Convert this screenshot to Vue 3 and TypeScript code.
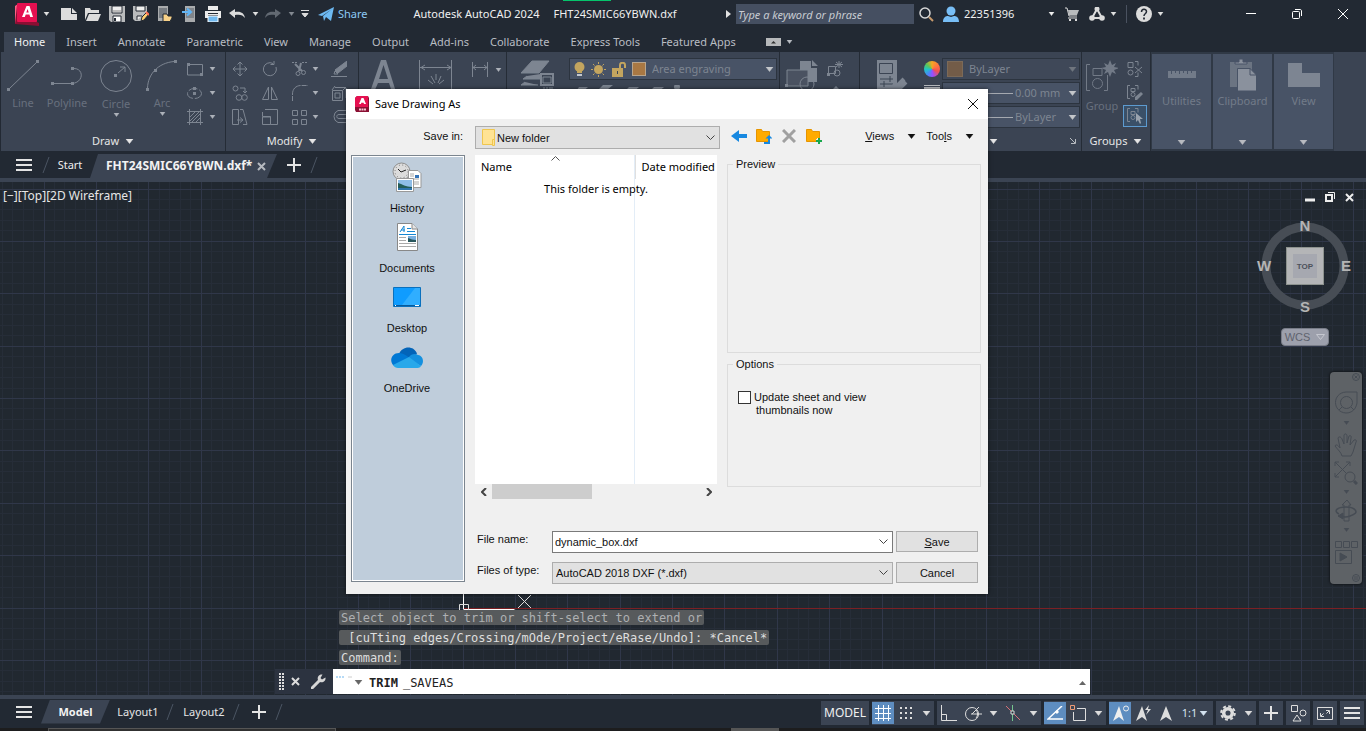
<script setup lang="ts">
import { h, ref } from 'vue'

type Glyph = [number, number, string]

const sq = (x: number, y: number) => `<rect x="${x}" y="${y}" width="3" height="3" fill="currentColor" stroke="none"/>`

const glyphs: Record<string, Glyph> = {
  logo: [24, 23, '<path d="M0 3 3 1v19l-3 1z" fill="#ff5f86" stroke="none"/><path d="M2 2 22 0v19l2 1v3L0 21z" fill="#8a0f33" stroke="none"/><rect x="2" width="20" height="19" rx="1" fill="#e51050" stroke="none"/><path d="M7 14 11.500 3h3L18 14h-2.800l-.8-2.500h-3.700L9.800 14zM11.300 9.500h2.400L12.600 6z" fill="#fff" stroke="none" fill-rule="evenodd"/>'],
  logoSmall: [14, 16, '<path d="M0 2 2 0h11l1 2v14H1l-1-2z" fill="#8a0f33" stroke="none"/><path d="M0 2 2 0h11v11H0z" fill="#e51050" stroke="none"/><path d="M4 8 6.500 2h2L11 8H9l-.4-1.200H6.300L6 8z" fill="#fff" stroke="none"/><path d="M4 13.500h7" stroke="#f3c5d2" stroke-width="2" stroke-dasharray="2 .5"/>'],
  caret: [7, 4, '<path d="M1 0h5L3.500 3.500z" fill="currentColor" stroke="currentColor" stroke-width=".5"/>'],
  caretBig: [9, 5, '<path d="M1 0h7L4.500 4.500z" fill="currentColor" stroke="currentColor" stroke-width=".5"/>'],
  caretUp: [7, 4, '<path d="M0 4h7L3.500 0z" fill="currentColor" stroke="none"/>'],
  play: [5, 8, '<path d="M0 0l5 4-5 4z" fill="currentColor" stroke="none"/>'],
  newFile: [16, 12, '<path d="M0 0h10v6h6v6H0zM11 0l5 5h-5z" fill="#dcdcdc" stroke="none"/>'],
  open: [16, 13, '<path d="M0 12V0h5l1 2h8v3H3z" fill="#dcdcdc" stroke="none"/><path d="M4 6h12l-3 7H1z" fill="#dcdcdc" stroke="none"/>'],
  save: [16, 16, '<path d="M0 0h16v16H2l-2-2z" fill="#b9bbbd" stroke="none"/><path d="M3 0h10v7H3z" fill="#eee" stroke="#222933"/><path d="M4 5h8" stroke="#888"/><path d="M4 16v-6h8v6z" fill="#fff" stroke="#222933"/><path d="M5 12h2v3H5z" fill="#222933" stroke="none"/>'],
  saveAs: [16, 16, '<path d="M0 0h14v8l-6 7H2l-2-2z" fill="#b9bbbd" stroke="none"/><path d="M3 0h9v5H3zM4 14v-4h5" fill="#eee" stroke="#222933"/><path d="M8 15l1-4 5-5 2 2-5 6z" fill="#ffcf70" stroke="#222933"/><path d="M13 6l3 3" stroke="#ff7055" stroke-width="2"/>'],
  fromWeb: [16, 16, '<rect x="1" width="10" height="15" fill="#a9abad" stroke="none"/><rect x="2" y="2" width="8" height="10" fill="#777c82" stroke="none"/><path d="M6 15.500V8h4l1 2h4v2l-2 3.500z" fill="#f9d288" stroke="#222933"/>'],
  toWeb: [14, 16, '<path d="M3 0h10v16H3z" fill="#a9abad" stroke="none"/><path d="M4 2h8v10H4z" fill="#80858b" stroke="none"/><path d="M0 6h8M5 2.500l4 3.500-4 3.500" stroke="#62b5f5" stroke-width="2"/>'],
  print: [16, 16, '<path d="M3 0h10v4H3zM0 5h16v7h-3V9H3v3H0z" fill="#ececec" stroke="none"/><path d="M3 10h10v6H3z" fill="#71b9ef" stroke="#fff"/><path d="M3 7.500h10" stroke="#222933"/>'],
  undo: [16, 10, '<path d="M0 4l6-4v3c6-1 9 1 10 6-2-3-5-4-10-3v3z" fill="#dcdcdc" stroke="none"/>'],
  redo: [16, 10, '<path d="M16 4l-6-4v3C4 2 1 4 0 9c2-3 5-4 10-3v3z" fill="#626972" stroke="none"/>'],
  more: [8, 8, '<path d="M0 .5h8M1 3.500h6L4 7z" fill="#dcdcdc" stroke="#dcdcdc"/>'],
  plane: [16, 14, '<path d="M0 8 16 0l-3 14-5-4-2 4-1-5 9-7L4 9z" fill="#6db9f2" stroke="none"/>'],
  search: [15, 15, '<circle cx="6" cy="6" r="5" stroke="#d8d8d8" stroke-width="1.500"/><path d="M10 10l4 4" stroke="#c79a6c" stroke-width="2"/>'],
  user: [16, 16, '<circle cx="8" cy="5" r="4.500" fill="#78bef6" stroke="none"/><path d="M0 16c0-5 3-6 5-6l3 1 3-1c3 0 5 2 5 6z" fill="#78bef6" stroke="none"/>'],
  cart: [14, 14, '<path d="M0 1h2l2 8h8" stroke="#dcdcdc"/><path d="M3 3h11l-2 5H4z" fill="#b9bbbd" stroke="none"/><path d="M3 11h9" stroke="#dcdcdc"/><rect x="4" y="12" width="2" height="2" fill="#dcdcdc" stroke="none"/><rect x="10" y="12" width="2" height="2" fill="#dcdcdc" stroke="none"/>'],
  adsk: [16, 14, '<path d="M8 2 3 11h10z" stroke="#dcdcdc" stroke-width="2"/><circle cx="8" cy="2" r="2.500" fill="#dcdcdc" stroke="none"/><circle cx="3" cy="11" r="2.800" fill="#dcdcdc" stroke="none"/><circle cx="13" cy="11" r="2.800" fill="#dcdcdc" stroke="none"/>'],
  help: [16, 16, '<circle cx="8" cy="8" r="8" fill="#dcdcdc" stroke="none"/><path d="M5.500 6c0-3.500 5-3.500 5-.5C10.500 8 8 7.500 8 10" stroke="#222933" stroke-width="1.500"/><path d="M8 11.500v2" stroke="#222933" stroke-width="1.800"/>'],
  minimize: [10, 10, '<path d="M0 4.500h10" stroke="#fff"/>'],
  restore: [10, 10, '<rect x=".5" y="2.500" width="7" height="7" rx="1" stroke="#fff"/><path d="M3 .5h5c1 0 1.500.5 1.500 1.500v5" stroke="#fff"/>'],
  close: [10, 10, '<path d="M0 0l10 10M10 0L0 10" stroke="currentColor"/>'],
  closeBold: [9, 9, '<path d="M1 1l7 7M8 1L1 8" stroke="currentColor" stroke-width="2"/>'],
  ribbonToggle: [15, 8, '<path d="M0 0h15v8H0z" fill="#b7b9bb" stroke="none"/><path d="M5 5.500h5L7.500 3z" fill="#333" stroke="none"/>'],
  line: [32, 31, sq(0, 28) + sq(29, 0) + '<path d="M3 28 29 3"/>'],
  poly: [32, 31, sq(0, 22) + sq(20, 22) + sq(20, 7) + '<path d="M3 23.500h18c12-1 12-15 2-15"/>'],
  circle: [32, 32, '<circle cx="16" cy="16" r="15.500"/>' + sq(14, 14) + '<path d="M18 13l7-6M20 7h5v5"/>'],
  arc: [32, 31, sq(0, 28) + sq(8, 9) + sq(28, 0) + '<path d="M1.500 28C2 14 12 3 28 1.500"/>'],
  rect: [16, 13, '<path d="M3 1.500h12.500v9M13 12H.5V3"/>' + sq(0, 0) + sq(13, 10)],
  ellipse: [15, 12, '<ellipse cx="7.500" cy="6.500" rx="7" ry="5" stroke-dasharray="9 2"/>' + sq(6, 5) + sq(6, 0)],
  hatch: [16, 16, '<path d="M2.500 0v16M13.500 0v16M0 2.500h16M0 13.500h16M3 8l5-5M3 12l9-9M5 13l8-8M9 13l4-4"/>'],
  move: [16, 16, '<path d="M8 1v14M1 8h14M5.500 3.500 8 1l2.500 2.500M5.500 12.500 8 15l2.500-2.500M3.500 5.500 1 8l2.500 2.500M12.500 5.500 15 8l-2.500 2.500"/>'],
  rotate: [16, 16, '<path d="M11 2.500A6.500 6.500 0 1 0 14 6M12 0v3.500H8.500"/>'],
  trim: [16, 16, '<path d="M0 1.500h6M10 1.500h6" stroke-dasharray="2 1"/><path d="M3 3l7 7M9 2 7 10" stroke-width="2"/><circle cx="6" cy="12.500" r="2"/><circle cx="11.500" cy="11.500" r="2"/>'],
  erase: [16, 16, '<path d="M16 0v5l-9 7-3-3z" fill="currentColor"/><path d="M4 10l3 3H3zM0 15.500h16"/>'],
  copy: [16, 16, '<circle cx="3.500" cy="3.500" r="2.500"/><circle cx="7" cy="12.500" r="2.800"/><circle cx="12.500" cy="12.500" r="2.800"/><path d="M8 3h5v5M11 6l2 2 2-2"/>'],
  mirror: [16, 16, '<path d="M6.500 2v12.500H.5zM9.500 2v12.500h6z"/>'],
  fillet: [16, 16, '<path d="M.5 16V9C.5 4 4 .5 9 .5h7" stroke-dasharray="5 1 14 1"/>'],
  explode: [16, 16, '<path d="M1.500 5.500h10v10h-10zM4 2.500h10M15 3v10M4 8h5v5H4zM1 5l3-4M12 5l3-3"/>'],
  stretch: [16, 16, '<path d="M.5.500h6v15h-6zM8 .5h3l4 15h-4M5 11h5M8 8.500l3 2.500-3 2.500"/>'],
  scale: [16, 16, '<path d="M3 .5h12.500v15H8.500V7.500H.5V3M.5 8h8v7.500h-8z"/>'],
  array: [15, 15, '<path d="M.5.500h5v5h-5zM9.500.500h5v5h-5zM.5 9.500h5v5h-5zM9.500 9.500h5v5h-5z"/>'],
  offset: [16, 14, '<path d="M16 .5H7a6.500 6.500 0 0 0 0 12h9M16 4.500H8c-3 0-3 4 0 4h8"/>'],
  bigA: [26, 32, '<path d="M0 32 11 0h5l10 32h-4l-3-9H8l-4 9zM9 19h9L13.500 5z" fill="currentColor" stroke="none"/>'],
  dimension: [34, 34, '<path d="M.5 0v34M32.500 0v34M1 7.500h32M6 5 2 7.500 6 10M28 5l4 2.500-4 2.500" /><path d="M9 20l5 4M25 20l-5 4M12 16l4 7M22 16l-3 7M17 14v6"/>'],
  linear: [17, 15, '<path d="M.5 0v15M15.500 0v15M1 5.500h14M4 3 1 5.500 4 8M12 3l3 2.500L12 8"/>'],
  layers: [34, 34, '<path d="M11 1h17L18 13H0zM6 16l-4 3h18l6-6M4 22l-4 3h17M4 29l-4 3h16" fill="currentColor"/><path d="M20 14h12v11H20z" fill="#3b4453" stroke="currentColor" stroke-width="2"/><path d="M22 17h8v6h-8zM22 28h2M26 27v6M28 28h4"/>'],
  bulb: [11, 15, '<circle cx="5.500" cy="5" r="5" fill="#c3a55f" stroke="none"/><path d="M3 9h5v2H3z" fill="#c3a55f" stroke="none"/><path d="M3 12h5v2H3z" fill="#c3c8cf" stroke="none"/>'],
  sun: [15, 15, '<circle cx="7.500" cy="7.500" r="4.500" fill="#c3a55f" stroke="none"/><path d="M7.500 0v2M7.500 13v2M0 7.500h2M13 7.500h2M2 2l1.500 1.500M11.500 11.500 13 13M2 13l1.500-1.500M11.500 3.500 13 2" stroke="#c3a55f"/>'],
  lock: [14, 15, '<path d="M0 6h11v9H0z" fill="#c3a55f" stroke="none"/><path d="M8 6V3c0-3 5-3 5 0v3" stroke="#c3a55f" stroke-width="2"/><path d="M5.500 9v3" stroke="#3b4453"/>'],
  layerRow: [130, 14, '<g fill="currentColor" stroke="none"><path d="M5 2h9L6 9H0zM29 0h10L28 9h-8zM55 2h10l-8 7h-9zM80 2h10l-8 7h-9z"/><circle cx="103" cy="2" r="3"/></g>'],
  block: [34, 34, '<path d="M15 1h11v7h6v14H15zM27 0l6 6h-6z" fill="currentColor" stroke="none"/><path d="M2 10h21v16H2z" fill="#4a5261"/><circle cx="22" cy="24" r="7"/>' + sq(0, 24)],
  blockEdit: [16, 16, '<path d="M1.500 5.500h7v7h-7z"/><circle cx="10" cy="12" r="3"/><path d="M12 0v7M9 1l6 5M15 1 9 6M8 3.500h8"/>' + sq(0, 12)],
  pencil: [14, 14, '<path d="M0 8 8 0l4 4-8 8H0z" fill="currentColor" stroke="none"/>'],
  props: [32, 34, '<path d="M1 0h20v34H1z" fill="currentColor" stroke="none"/><path d="M3.500 3.500h13v10h-13zM4 19h13M4 24h13M14 16v6M8 21v6" stroke="#3b4453"/><path d="M17 24l10 10M23 29l7-7M20 27l8-8" stroke-width="4"/>'],
  group: [32, 34, '<path d="M4 4.500H.5v26H4M18 30.500h3.500V15M7 8.500h9v7H7z"/><circle cx="11.500" cy="23.500" r="5"/><path d="M24 0l2 5 4-2-2 4 5 1-5 2 2 4-4-2-2 5-2-5-4 2 2-4-5-2 5-1-2-4 4 2z" fill="currentColor" stroke="none"/>'],
  ungroup: [16, 16, '<path d="M1 1.500h5v5H1zM8 .5h3v4M8 15.500h3v-4M8 6l7 6M15 6l-7 6"/><circle cx="3.500" cy="11.500" r="2.500"/>'],
  groupEdit: [16, 16, '<path d="M3 .5H.5v13H3M8 .5h3v4M4 3.500h4v3H4z"/><circle cx="6" cy="9.500" r="2"/><path d="M8 15v-3l6-5 2 2-6 6z" fill="currentColor" stroke="none"/>'],
  groupSel: [16, 16, '<path d="M3 .5H.5v13H3M8 .5h3v4M4 3.500h4v3H4z"/><circle cx="6" cy="9.500" r="2"/><path d="M9 5v9l2-2 2 4 1-1-1-4h3z" fill="#9aa3ae" stroke="none"/>'],
  launcher: [6, 6, '<path d="M0 0l5 5M5.500 1v4.500H1" stroke="#b7bbc0"/>'],
  ruler: [28, 7, '<path d="M0 0h28v7H0z" fill="currentColor" stroke="none"/><path d="M3.500 0v3M7.500 0v2M11.500 0v3M15.500 0v2M19.500 0v3M23.500 0v2" stroke="#485366"/>'],
  clipboard: [26, 32, '<path d="M0 3h22v25H0z" fill="#6b7482" stroke="none"/><path d="M5 5V3h4V0h4v3h4v2z" fill="#8a919d" stroke="#485366"/><path d="M7.500 9.500H20l6.500 6.500v16h-19z" fill="#8a919d" stroke="#485366"/><path d="M20 9v7h6" stroke="#485366"/>'],
  view: [32, 24, '<path d="M0 0h14v10h18v14H0z" fill="#7d8592" stroke="none"/>'],
  burger: [16, 12, '<path d="M0 1h16M0 6h16M0 11h16" stroke="#e4e4e4" stroke-width="2"/>'],
  plus: [14, 14, '<path d="M7 0v14M0 7h14" stroke="#e4e4e4" stroke-width="2"/>'],
  slash: [8, 16, '<path d="M1 16 7 0" stroke="#4b5563"/>'],
  folder: [13, 17, '<path d="M.5.500h12v15H.5z" fill="#ffe394" stroke="#efc64f"/><path d="M10.500 10.500h2v6h-2z" fill="#ffe394" stroke="#efc64f"/>'],
  chevron: [9, 6, '<path d="M.5.500l4 4 4-4" stroke="#444"/>'],
  chevronUp: [9, 5, '<path d="M.5 4.500l4-4 4 4" stroke="#555"/>'],
  chevronL: [6, 8, '<path d="M5 0 1 4l4 4" stroke="#444" stroke-width="2"/>'],
  chevronR: [6, 8, '<path d="M1 0l4 4-4 4" stroke="#444" stroke-width="2"/>'],
  back: [16, 12, '<path d="M0 6 8 0v4h8v4H8v4z" fill="#1788e0" stroke="none"/>'],
  upFolder: [16, 17, '<path d="M.5 1.500h5l1 2h7v10H.5z" fill="#ffab00" stroke="#e69500"/><path d="M8 15h5V9" stroke="#1788e0" stroke-width="2"/><path d="M9.500 10.500 13 7l3.500 3.500z" fill="#1788e0" stroke="none"/>'],
  del: [14, 14, '<path d="M1 1l12 12M13 1 1 13" stroke="#a0a0a0" stroke-width="3"/>'],
  addFolder: [16, 17, '<path d="M.5 1.500h5l1 2h7v10H.5z" fill="#ffab00" stroke="#e69500"/><path d="M13 10v6M10 13h6" stroke="#efefef" stroke-width="4"/><path d="M13 10v6M10 13h6" stroke="#19a84c" stroke-width="2"/>'],
  history: [30, 30, '<circle cx="9.500" cy="9.500" r="8.500" fill="#dcdcdc" stroke="#8d8d8d"/><circle cx="9.500" cy="9.500" r="6.500" stroke="#777" stroke-dasharray="1 2.400"/><path d="M6 7l3 3 5-2" stroke="#222"/><path d="M16.500 8.500H26l3 3v14H16.500z" fill="#fff" stroke="#999"/><path d="M18 12h4M18 14h4M18 17h9M18 20h9M18 22h9" stroke="#aaa"/><path d="M23 13h4v3h-4z" fill="#3674b7" stroke="none"/><path d="M4.500 16.500h17v13h-17z" fill="#fff" stroke="#999"/><path d="M6 18h14v10H6z" fill="#8ebde8" stroke="none"/><path d="M6 21c4 1 8 4 14 4v3H6z" fill="#235c58" stroke="none"/><path d="M6 26h14v2H6z" fill="#2e74ad" stroke="none"/>'],
  documents: [21, 28, '<path d="M.5.500H15l5.500 5.500v21.500H.5z" fill="#fff" stroke="#888"/><path d="M15 .5V6h5.500" fill="#e6e6e6" stroke="#888"/><path d="M3 9 7 3v6M4 7h4M10 5.500h4M10 8.500h8M2 11.500h17" stroke="#1688d4"/><path d="M2 14.500h7M2 17.500h7M2 20.500h17M2 23.500h17" stroke="#aaa"/><path d="M11 13h8v6h-8z" fill="#79afe0" stroke="none"/><path d="M11 15c3 1 5 2 8 2v2h-8z" fill="#28575d" stroke="none"/>'],
  desktop: [28, 20, '<path d="M.5.500h27v19H.5z" fill="#0f9cff" stroke="#0a70bd"/><path d="M27 1v17H9L22 1z" fill="#30aeff" stroke="none"/><path d="M1 18.500h26" stroke="#075a9c"/><path d="M2 18.500h1M22 18.500h4" stroke="#fff"/>'],
  onedrive: [32, 21, '<path d="M8 7c3-8 15-9 18 0L16 12z" fill="#0364b8" stroke="none"/><path d="M2 18c-4-5-1-12 6-12 4 0 8 3 11 5L4 19z" fill="#0078d4" stroke="none"/><path d="M18 10c2-3 6-4 9-2 6 1 6 8 3 11L17 12z" fill="#1490df" stroke="none"/><path d="M2 18l16-8 12 9c-1 2-3 2-5 2H7c-2 0-4-1-5-3z" fill="#28a8ea" stroke="none"/>'],
  vpMin: [10, 10, '<path d="M0 8h10" stroke="#eee" stroke-width="3"/>'],
  vpMax: [10, 10, '<path d="M1 3h6v6H1z" stroke="#eee" stroke-width="2"/><path d="M3 .5h6.500V7" stroke="#eee"/>'],
  grip: [5, 17, '<path d="M1 0v17M4 0v17" stroke="#ddd" stroke-width="2" stroke-dasharray="2 1"/>'],
  wrench: [15, 15, '<path d="M1 14 8 7" stroke="#d6d6d6" stroke-width="3" stroke-linecap="round"/><path d="M14.500 3.500 11 5.500 9.500 4l2-3.500C8 0 6 3 7 6l2 2c3 1 6-1 5.500-4.500z" fill="#d6d6d6" stroke="none"/>'],
  prompt: [16, 12, '<path d="M0 1h8" stroke="#6db5ed" stroke-dasharray="2 1"/><path d="M12 1h4" stroke="#ccc"/>'],
  wheel: [23, 23, '<path d="M11 1h11v11c-1 6-5 10-11 10C-3 21-3 2 11 1z"/><circle cx="11.500" cy="11.500" r="6"/><path d="M7 16l-3 3M16 16l3 3"/>'],
  hand: [24, 24, '<path d="M8 23C7 19 4 17 1 13c1-2 3-1 5 2L4 5c1-2 3-1 4 1l2 5V2c1-2 3-1 3 1v7l2-7c1-1 3 0 2 2l-1 7 4-5c2-1 3 1 2 2l-3 10-2 4z"/>'],
  zoomNav: [24, 24, '<path d="M1 1l14 14M1 16 16 1M1 5V1h4M12 1h4v4M1 12v4h4"/><circle cx="16" cy="16" r="5" fill="#5e6266"/><path d="M20 20l3 3" stroke-width="3"/>'],
  orbit: [23, 23, '<path d="M9 22V6H7l5-5 4 5h-2v16z"/><path d="M4 15c-6-3-2-7 7-7s15 6 4 9c-3 1-7 1-9 0" stroke-width="1.500"/><path d="M3 17l5-3v6z" fill="currentColor"/>'],
  motion: [23, 24, '<path d="M.5 1.500h6v6h-6zM8.500 1.500h6v6h-6zM16.500 1.500h6v6h-6zM.5 10.500h16v13H.5z"/><path d="M5 13l7 4-7 4z" fill="currentColor"/>'],
  tinyX: [8, 8, '<circle cx="4" cy="4" r="3.500"/><path d="M2.500 2.500l3 3M5.500 2.500l-3 3"/>'],
  tinyEq: [8, 8, '<circle cx="4" cy="4" r="3.500"/><path d="M2 3h4M2 5h4"/>'],
  sGrid: [16, 16, '<path d="M3.500 0v16M8.500 0v16M13.500 0v16M0 3.500h16M0 8.500h16M0 13.500h16" stroke="#fff"/>'],
  sSnap: [13, 13, '<path d="M0 1h13M0 6h13M0 11h13" stroke="#ddd" stroke-width="2" stroke-dasharray="2 3"/>'],
  sOrtho: [16, 16, '<path d="M.5 0v15.500H16M.5 9.500h5v6" stroke="#ddd"/>'],
  sPolar: [17, 15, '<circle cx="7" cy="8" r="6.500" stroke="#ddd"/><path d="M6 8h11M7 8l7-7M11 4c2 2 2 6 0 8" stroke="#ddd"/>'],
  sIso: [16, 16, '<path d="M1 1l14 14" stroke="#d77078"/><path d="M7.500 0v16" stroke="#75c58e"/><path d="M6 6h3v3H6z" fill="#222933" stroke="#ddd"/>'],
  sTrack: [16, 14, '<path d="M15 0 1 13h15" stroke="#fff" stroke-width="1.500"/><path d="M9 5l2 2" stroke="#fff" stroke-width="3"/>'],
  sSnap2: [16, 17, '<path d="M7 3.500h8.500v12h-12V7" stroke="#ddd"/><path d="M.5.500h4v4h-4z" stroke="#ef9b75"/>'],
  sAnno: [17, 17, '<path d="M7 1l5 15-5-4-6 4z" fill="#eee" stroke="none"/><circle cx="14" cy="3.500" r="2.500" stroke="#eee"/>'],
  sAnno2: [17, 17, '<path d="M7 1l5 15-5-4-6 4zM14 0l-4 5h3l-2 5 5-6h-3z" fill="#ddd" stroke="none"/>'],
  sAnno3: [14, 17, '<path d="M7 1l6 15-6-4-6 4z" fill="#ddd" stroke="none"/>'],
  gear: [16, 16, '<circle cx="8" cy="8" r="4.300" stroke="#ddd" stroke-width="3.500"/><circle cx="8" cy="8" r="6.800" stroke="#ddd" stroke-width="2" stroke-dasharray="3 2.340"/>'],
  sShapes: [17, 17, '<path d="M1.500.500h6v6h-6zM7 10l4 6H3z" stroke="#ddd"/><circle cx="13" cy="8" r="3" stroke="#ddd"/>'],
  sFull: [17, 13, '<path d="M.5.500h15v12H.5z" stroke="#ddd"/><path d="M9 3.500h3.500V7M12 4 9.500 6.500M3.500 6v3.500H7M4 9l2.500-2.500" stroke="#ddd"/>'],
}

const Ico = (p: { n: string }) => {
  const [w, hgt, body] = glyphs[p.n]
  return h('svg', {
    width: w, height: hgt, viewBox: `0 0 ${w} ${hgt}`,
    fill: 'none', stroke: 'currentColor', 'aria-hidden': 'true', innerHTML: body,
  })
}

const quick = [
  ['newFile', 'New'], ['open', 'Open'], ['save', 'Save'], ['saveAs', 'Save As'],
  ['fromWeb', 'Open from Web'], ['toWeb', 'Save to Web'], ['print', 'Plot'], ['undo', 'Undo'],
]
const ribbonTabs = ['Home', 'Insert', 'Annotate', 'Parametric', 'View', 'Manage', 'Output', 'Add-ins', 'Collaborate', 'Express Tools', 'Featured Apps']
const drawTools = [['line', 'Line'], ['poly', 'Polyline'], ['circle', 'Circle'], ['arc', 'Arc']]
const drawSmall = [['rect', 'Rectangle'], ['ellipse', 'Ellipse'], ['hatch', 'Hatch']]
const modifyTools = [
  ['move', ''], ['rotate', ''], ['trim', 'v'], ['erase', ''],
  ['copy', ''], ['mirror', ''], ['fillet', 'v'], ['explode', ''],
  ['stretch', ''], ['scale', ''], ['array', 'v'], ['offset', ''],
]
const collapsed = [['ruler', 'Utilities'], ['clipboard', 'Clipboard'], ['view', 'View']]
const places = [['history', 'History'], ['documents', 'Documents'], ['desktop', 'Desktop'], ['onedrive', 'OneDrive']]
const historyLines = [
  'Select object to trim or shift-select to extend or',
  ' [cuTting edges/Crossing/mOde/Project/eRase/Undo]: *Cancel*',
  'Command:',
]
const fileName = ref('dynamic_box.dxf')
const updateThumbs = ref(false)

// Grid of the drawing area: five minor cells to each major cell.
const majorStep = 52.38
function gridPath(kind: 'major' | 'minor') {
  let d = ''
  for (let k = -5; k < 360; k++) {
    if ((k % 5 === 0) !== (kind === 'major')) continue
    const x = Math.floor(44 + (k * majorStep) / 5) + 0.5
    const y = Math.floor(7 + (k * majorStep) / 5) + 0.5
    d += `M${x} 0V3000M0 ${y}H4000`
  }
  return d
}
const minorGrid = gridPath('minor')
const majorGrid = gridPath('major')
</script>

<template>
  <div class="app">
    <header class="titlebar">
      <button class="logo" aria-label="Application menu"><Ico n="logo" /><Ico n="caret" /></button>
      <button v-for="q in quick" :key="q[0]" class="tool" :aria-label="q[1]"><Ico :n="q[0]" /></button>
      <button class="thin" aria-label="Undo list"><Ico n="caret" /></button>
      <button class="tool" aria-label="Redo"><Ico n="redo" /></button>
      <button class="thin dim" aria-label="Redo list"><Ico n="caret" /></button>
      <button class="thin wide" aria-label="Customize toolbar"><Ico n="more" /></button>
      <button class="share"><Ico n="plane" />Share</button>
      <div class="app-title"><span>Autodesk AutoCAD 2024</span><span>FHT24SMIC66YBWN.dxf</span></div>
      <div class="title-right">
        <button class="thin" aria-label="Collapse search"><Ico n="play" /></button>
        <input class="keyword" type="text" placeholder="Type a keyword or phrase" aria-label="Search" />
        <button class="tool" aria-label="Search"><Ico n="search" /></button>
        <button class="account"><Ico n="user" />22351396<Ico n="caret" class="push" /></button>
        <button class="tool" aria-label="App store"><Ico n="cart" /></button>
        <button class="tool adsk" aria-label="Autodesk apps"><Ico n="adsk" /><Ico n="caret" /></button>
        <button class="tool help" aria-label="Help"><Ico n="help" /><Ico n="caret" /></button>
        <div class="win">
          <button aria-label="Minimize"><Ico n="minimize" /></button>
          <button aria-label="Restore"><Ico n="restore" /></button>
          <button aria-label="Close"><Ico n="close" /></button>
        </div>
      </div>
      <i class="progress"></i>
    </header>

    <nav class="tabs" aria-label="Ribbon tabs">
      <button v-for="(t, i) in ribbonTabs" :key="t" :class="{ on: i === 0 }">{{ t }}</button>
      <button class="toggle" aria-label="Minimize ribbon"><Ico n="ribbonToggle" /><Ico n="caret" /></button>
    </nav>

    <section class="ribbon">
      <div class="panel draw">
        <div class="row">
          <button v-for="(t, i) in drawTools" :key="t[0]" class="big" :class="t[0]"><Ico :n="t[0]" /><span>{{ t[1] }}</span><Ico v-if="i > 1" n="caret" class="arrow" /></button>
          <div class="smalls">
            <button v-for="t in drawSmall" :key="t[0]" :aria-label="t[1]"><span><Ico :n="t[0]" /></span><Ico n="caret" class="arrow" /></button>
          </div>
        </div>
        <button class="foot">Draw<Ico n="caretBig" /></button>
      </div>
      <div class="panel modify">
        <div class="matrix">
          <button v-for="t in modifyTools" :key="t[0]" :aria-label="t[0]"><span><Ico :n="t[0]" /></span><Ico v-if="t[1]" n="caret" class="arrow" /></button>
        </div>
        <button class="foot">Modify<Ico n="caretBig" /></button>
      </div>
      <div class="panel annotation">
        <div class="row icons">
          <button aria-label="Text"><Ico n="bigA" /></button>
          <button aria-label="Dimension"><Ico n="dimension" /></button>
          <button class="linear" aria-label="Linear"><Ico n="linear" /><Ico n="caret" class="arrow" /></button>
        </div>
      </div>
      <div class="panel layers">
        <button aria-label="Layer properties"><Ico n="layers" /></button>
        <div class="layer-col">
          <div class="combo lit">
            <Ico n="bulb" /><Ico n="sun" /><Ico n="lock" /><i class="swatch"></i>
            <select aria-label="Layer"><option>Area engraving</option></select>
            <Ico n="caretBig" class="end" />
          </div>
          <Ico n="layerRow" />
        </div>
      </div>
      <div class="panel block">
        <button aria-label="Insert block"><Ico n="block" /></button>
        <div class="stack"><button aria-label="Create block"><Ico n="blockEdit" /></button><button aria-label="Edit block"><Ico n="pencil" /></button></div>
      </div>
      <div class="panel properties">
        <div class="row">
          <button class="match" aria-label="Match properties"><Ico n="props" /></button>
          <div class="prop-icons"><i class="color-wheel"></i><i class="weight"></i></div>
          <div class="combos">
            <div class="combo off"><i class="swatch dull"></i><select aria-label="Object color"><option>ByLayer</option></select><Ico n="caretBig" class="end" /></div>
            <div class="combo"><i class="rule"></i><select aria-label="Lineweight"><option>0.00 mm</option></select><Ico n="caretBig" class="end" /></div>
            <div class="combo"><i class="rule"></i><select aria-label="Linetype"><option>ByLayer</option></select><Ico n="caretBig" class="end" /></div>
          </div>
        </div>
        <div class="foot"><Ico n="caretBig" /><button class="launch" aria-label="Properties palette"><Ico n="launcher" /></button></div>
      </div>
      <div class="panel groups">
        <div class="row">
          <button class="big"><Ico n="group" /><span>Group</span></button>
          <div class="stack">
            <button aria-label="Ungroup"><Ico n="ungroup" /></button>
            <button aria-label="Group edit"><Ico n="groupEdit" /></button>
            <button class="picked" aria-label="Group selection"><Ico n="groupSel" /></button>
          </div>
        </div>
        <button class="foot">Groups<Ico n="caretBig" /></button>
      </div>
      <button v-for="c in collapsed" :key="c[1]" class="panel closed"><span class="pic"><Ico :n="c[0]" /></span><span>{{ c[1] }}</span><Ico n="caretBig" class="drop" /></button>
    </section>

    <nav class="files" aria-label="Open drawings">
      <button class="menu" aria-label="Tab menu"><Ico n="burger" /></button>
      <Ico n="slash" />
      <button class="start">Start</button>
      <div class="file-on"><button>FHT24SMIC66YBWN.dxf*</button><button class="x" aria-label="Close drawing"><Ico n="closeBold" /></button></div>
      <button class="add" aria-label="New drawing"><Ico n="plus" /></button>
      <Ico n="slash" />
    </nav>

    <main class="canvas">
      <svg class="sheet" width="100%" height="100%" fill="none" aria-hidden="true">
        <path :d="minorGrid" stroke="#262d38" />
        <path :d="majorGrid" stroke="#303749" />
        <line x1="464" y1="426.5" x2="100%" y2="426.5" stroke="#7c2024" />
        <path d="M463.500 411v16M463.500 427.500h51" stroke="#fff" />
        <path d="M459.500 422.500h9v9h-9z" stroke="#ddd" />
        <path d="M518 413l13 13M531 413l-13 13" stroke="#ddd" />
      </svg>
      <div class="view-label">[−][Top][2D Wireframe]</div>
      <div class="vp-controls">
        <button aria-label="Minimize view"><Ico n="vpMin" /></button>
        <button aria-label="Maximize view"><Ico n="vpMax" /></button>
        <button aria-label="Close view"><Ico n="closeBold" /></button>
      </div>
      <svg class="cube" width="100" height="100" viewBox="0 0 100 100" role="img" aria-label="View cube">
        <circle cx="50" cy="50" r="39" fill="none" stroke="#474d55" stroke-width="9" />
        <rect x="31.500" y="31.500" width="37" height="37" fill="#b4b5b7" stroke="#8d928e" />
        <rect x="38" y="38" width="24" height="24" fill="#a6a8b0" />
        <g font-family="Liberation Sans, sans-serif" font-weight="bold" text-anchor="middle" fill="#b4b4b4" font-size="15">
          <text x="50" y="15">N</text><text x="50" y="96">S</text><text x="9" y="55">W</text><text x="91" y="55">E</text>
          <text x="50" y="53" font-size="8" fill="#4c515b">TOP</text>
        </g>
      </svg>
      <button class="wcs">WCS<svg width="9" height="6" viewBox="0 0 9 6" fill="none" stroke="#c5c7cf"><path d="M.5.500h8l-4 5z" /></svg></button>
      <aside class="navbar">
        <button class="corner" aria-label="Close navigation bar"><Ico n="tinyX" /></button>
        <button class="wheel" aria-label="Navigation wheel"><Ico n="wheel" /><Ico n="caret" /></button>
        <button class="pan" aria-label="Pan"><Ico n="hand" /></button>
        <button class="zm" aria-label="Zoom"><Ico n="zoomNav" /><Ico n="caret" /></button>
        <button class="orb" aria-label="Orbit"><Ico n="orbit" /><Ico n="caret" /></button>
        <button class="mot" aria-label="Show motion"><Ico n="motion" /></button>
        <button class="corner" aria-label="Navigation options"><Ico n="tinyEq" /></button>
      </aside>
      <div class="command">
        <div class="log"><p v-for="l in historyLines" :key="l">{{ l }}</p></div>
        <div class="cmd-row">
          <div class="cmd-tools"><Ico n="grip" /><button aria-label="Close command line"><Ico n="closeBold" /></button><button aria-label="Customize"><Ico n="wrench" /></button></div>
          <div class="cmd-line"><Ico n="prompt" /><button class="recent" aria-label="Recent commands"><Ico n="caretBig" /></button><b>TRIM</b><span>_SAVEAS</span><button class="up" aria-label="Expand history"><Ico n="caretUp" /></button></div>
        </div>
      </div>
    </main>

    <footer class="status">
      <nav class="layouts" aria-label="Layouts">
        <button class="menu" aria-label="Layout menu"><Ico n="burger" /></button>
        <button class="model">Model</button>
        <button class="lay">Layout1</button><Ico n="slash" />
        <button class="lay">Layout2</button><Ico n="slash" />
        <button class="add" aria-label="New layout"><Ico n="plus" /></button><Ico n="slash" />
      </nav>
      <div class="modes">
        <div class="set"><button class="word">MODEL</button></div>
        <div class="set"><button class="act" aria-label="Grid"><Ico n="sGrid" /></button><button class="w25" aria-label="Snap"><Ico n="sSnap" /></button><button class="dd" aria-label="Snap options"><Ico n="caretBig" /></button></div>
        <div class="set"><button class="w25" aria-label="Ortho"><Ico n="sOrtho" /></button><button class="w25" aria-label="Polar"><Ico n="sPolar" /></button><button class="dd" aria-label="Polar options"><Ico n="caretBig" /></button><button class="w25" aria-label="Isometric"><Ico n="sIso" /></button><button class="dd" aria-label="Isometric options"><Ico n="caretBig" /></button></div>
        <div class="set"><button class="act" aria-label="Object tracking"><Ico n="sTrack" /></button><button class="w25" aria-label="Object snap"><Ico n="sSnap2" /></button><button class="dd" aria-label="Object snap options"><Ico n="caretBig" /></button></div>
        <div class="set"><button class="act" aria-label="Annotation visibility"><Ico n="sAnno" /></button><button class="w25" aria-label="Auto scale"><Ico n="sAnno2" /></button><button class="w22" aria-label="Annotation scale"><Ico n="sAnno3" /></button><button class="ratio">1:1<Ico n="caretBig" /></button></div>
        <div class="set"><button class="w25" aria-label="Workspace"><Ico n="gear" /></button><button class="dd" aria-label="Workspace options"><Ico n="caretBig" /></button></div>
        <div class="set"><button class="w25" aria-label="Annotation monitor"><Ico n="plus" /></button></div>
        <div class="set"><button class="w25" aria-label="Isolate objects"><Ico n="sShapes" /></button></div>
        <div class="set"><button class="w25" aria-label="Clean screen"><Ico n="sFull" /></button></div>
        <div class="set"><button class="w25" aria-label="Customization"><Ico n="burger" /></button></div>
      </div>
    </footer>
    <div class="taskbar"><i></i><i></i></div>

    <div class="dialog" role="dialog" aria-label="Save Drawing As">
      <div class="dlg-title"><Ico n="logoSmall" /><h1>Save Drawing As</h1><button aria-label="Close dialog"><Ico n="close" /></button></div>
      <div class="dlg-top">
        <label for="savein">Save in:</label>
        <div class="pick"><Ico n="folder" /><select id="savein"><option>New folder</option></select><Ico n="chevron" /></div>
        <div class="dlg-tools">
          <button aria-label="Back"><Ico n="back" /></button>
          <button aria-label="Up one level"><Ico n="upFolder" /></button>
          <button aria-label="Delete"><Ico n="del" /></button>
          <button aria-label="New folder"><Ico n="addFolder" /></button>
        </div>
        <button class="txt"><span><u>V</u>iews</span><Ico n="caretBig" /></button>
        <button class="txt"><span>Too<u>l</u>s</span><Ico n="caretBig" /></button>
      </div>
      <div class="dlg-main">
        <div class="places">
          <button v-for="p in places" :key="p[0]"><span class="pic"><Ico :n="p[0]" /></span><span>{{ p[1] }}</span></button>
        </div>
        <div class="dlg-content">
          <div class="browse">
            <div class="listing">
              <div class="sheet-list">
                <table>
                  <thead><tr><th class="name">Name<Ico n="chevronUp" class="sort" /></th><th>Date modified</th></tr></thead>
                </table>
                <p>This folder is empty.</p>
              </div>
              <div class="hbar"><button aria-label="Scroll left"><Ico n="chevronL" /></button><i></i><button aria-label="Scroll right"><Ico n="chevronR" /></button></div>
            </div>
            <div class="side">
              <fieldset class="preview"><legend>Preview</legend></fieldset>
              <fieldset class="options"><legend>Options</legend>
                <input id="thumbs" v-model="updateThumbs" type="checkbox" />
                <label for="thumbs">Update sheet and view<br /><span>thumbnails now</span></label>
              </fieldset>
            </div>
          </div>
          <form class="entry" @submit.prevent>
            <label for="fname">File name:</label>
            <div class="pick white"><input id="fname" v-model="fileName" type="text" /><Ico n="chevron" /></div>
            <button><u>S</u>ave</button>
            <label for="ftype">Files of type:</label>
            <div class="pick"><select id="ftype"><option>AutoCAD 2018 DXF (*.dxf)</option></select><Ico n="chevron" /></div>
            <button>Cancel</button>
          </form>
        </div>
      </div>
    </div>
  </div>
</template>

<style>
body { margin: 0; background: #222933; }
</style>

<style scoped>
* { box-sizing: border-box; }
.app { position: relative; min-height: 100vh; display: flex; flex-direction: column; overflow: hidden; background: #222933; color: #e2e2e2; font: 11px/16px "Noto Sans", sans-serif; }
button, input, select { font: inherit; color: inherit; background: none; border: 0; padding: 0; margin: 0; appearance: none; border-radius: 0; white-space: nowrap; }
button { display: flex; align-items: center; justify-content: center; }
svg { display: block; flex: none; }
i { display: block; flex: none; }

.titlebar { position: relative; display: flex; align-items: center; height: 28px; padding-left: 15px; }
.logo { gap: 4px; width: 42px; justify-content: flex-start; }
.tool { width: 24px; height: 24px; }
.thin { width: 12px; height: 24px; }
.thin.wide { width: 16px; }
.dim { color: #858b93; }
.share { gap: 4px; margin-left: 5px; color: #8cc9f5; }
.app-title { flex: 1; display: flex; gap: 14px; padding-left: 46px; color: #f0f0f0; white-space: nowrap; }
.title-right { display: flex; align-items: center; width: 644px; }
.keyword { width: 178px; height: 20px; margin-left: 2px; padding: 0 2px; background: #454f61; font-style: italic; }
.keyword::placeholder { color: #c8ccd2; opacity: 1; }
.account { gap: 5px; width: 112px; margin-left: 5px; justify-content: flex-start; color: #f0f0f0; }
.push { margin-left: auto; }
.title-right .tool + .adsk { margin-left: 4px; }
.account + .tool { margin-left: 5px; }
.adsk { gap: 5px; width: 29px; }
.help { gap: 5px; width: 47px; margin-left: 9px; border-left: 1px solid #4a5260; height: 18px; }
.win { display: flex; margin-left: auto; }
.win button { width: 46px; height: 28px; color: #fff; }
.progress { position: absolute; top: 0; left: 563px; width: 48px; height: 1px; background: #05c46b; }

.tabs { display: flex; gap: 1px; height: 24px; padding: 4px 0 0 4px; }
.tabs button { padding: 0 10px; color: #b9bdc3; height: 20px; }
.tabs .on { min-width: 51px; background: #3b4453; color: #f2f2f2; }
.tabs .toggle { gap: 5px; margin-left: 9px; }

.ribbon { display: flex; height: 99px; background: #3b4453; margin-left: 1px; color: #7d8591; }
.panel { display: flex; flex-direction: column; border-right: 1px solid #252c36; padding-top: 8px; flex: none; }
.row { display: flex; }
.panel .foot { display: flex; align-items: center; justify-content: center; gap: 6px; margin-top: auto; height: 20px; color: #e6e6e6; }
.arrow { color: #aeb3ba; }
.draw { width: 225px; }
.modify { width: 133px; }
.annotation { width: 148px; }
.layers { width: 273px; flex-direction: row; gap: 14px; padding-left: 14px; align-items: flex-start; }
.block { width: 80px; flex-direction: row; gap: 4px; padding-left: 5px; align-items: flex-start; }
.properties { width: 222px; }
.groups { width: 69px; }
.big { flex-direction: column; justify-content: flex-start; width: 44px; color: #7d8591; }
.big.circle { width: 54px; }
.big.arc { width: 38px; }
.big span { margin-top: 3px; color: #68707e; line-height: 18px; }
.smalls { display: flex; flex-direction: column; margin-left: 6px; }
.smalls button { height: 24px; }
.smalls button span { display: flex; width: 18px; }
.smalls .arrow { margin-left: 4px; }
.smalls, .matrix, .stack { margin-top: -3px; }
.matrix { display: grid; grid-template-columns: 30px 30px 39px 30px; grid-auto-rows: 24px; padding-left: 6px; }
.matrix button { justify-content: flex-start; gap: 3px; }
.matrix button span { display: flex; width: 17px; }
.icons { gap: 23px; align-items: flex-start; padding-left: 11px; }
.icons .linear { gap: 6px; margin-left: -4px; padding-top: 2px; }
.layer-col { display: flex; flex-direction: column; gap: 5px; margin-top: -2px; }
.layer-col > svg { margin-left: 5px; }
.combo { display: flex; align-items: center; gap: 6px; width: 208px; height: 22px; padding: 0 2px 0 4px; background: #485366; border: 1px solid #2c343f; color: #7d8591; }
.combo select { flex: 1; min-width: 0; }
.combo .end { color: #c4c7cb; margin-left: auto; }
.swatch { width: 14px; height: 14px; background: #a97843; border: 1px solid #b9a58c; }
.swatch.dull { background: #735c48; border-color: #7c6a58; width: 16px; height: 16px; }
.stack { display: flex; flex-direction: column; }
.stack button { width: 24px; height: 24px; }
.match { align-self: flex-start; padding-left: 16px; }
.prop-icons { margin: 1px 0 0 16px; width: 18px; }
.color-wheel { width: 16px; height: 16px; border-radius: 50%; background: conic-gradient(#f5a623, #ff7043 18%, #ec4f55 32%, #9a4dff 48%, #4a86f7 60%, #20c6c6 74%, #5bc65a 86%, #f5a623); }
.weight { width: 16px; height: 4px; margin-top: 8px; border: solid #b9bcc0; border-width: 1px 0 2px; }
.combos { display: flex; flex-direction: column; gap: 2px; margin-top: -2px; }
.combos .combo { width: 138px; }
.combo.off { background: #3f4858; }
.combo.off .end { color: #70767f; }
.rule { width: 66px; height: 1px; background: #a5a9b0; margin-right: -4px; }
.properties .foot { justify-content: flex-start; padding-left: 129px; }
.launch { margin-left: auto; margin-right: 5px; }
.groups .big { width: 40px; color: #727a87; }
.groups .stack button { margin-left: 1px; }
.groups .stack .picked { border: 1px solid #5d9bd0; background: #3a5068; height: 22px; }
.closed { width: 61px; align-items: center; justify-content: flex-start; background: #485366; border: 1px solid #303946; border-width: 2px 1px; padding: 3px 0 0; color: #727b89; }
.closed .pic { display: flex; align-items: center; justify-content: center; height: 35px; }
.closed .pic + span { margin-top: 1px; }
.closed .drop { color: #b8bbc0; margin: auto 0 4px; }

.files { display: flex; align-items: center; height: 31px; border-bottom: 4px solid #3b4453; }
.menu { width: 48px; padding-left: 1px; height: 24px; }
.files .menu { width: 42px; padding-left: 6px; }
.start { width: 40px; color: #eee; }
.file-on { display: flex; align-items: center; align-self: flex-end; gap: 5px; width: 187px; height: 24px; padding-left: 16px; background: #3b4453; clip-path: polygon(8px 0, 100% 0, calc(100% - 10px) 100%, 0 100%); color: #f2f2f2; font-weight: bold; font-size: 12px; }
.x { color: #b6bac0; }
.files .add { width: 33px; }

.canvas { position: relative; flex: 1; background: #212830; }
.sheet { position: absolute; inset: 0; }
.view-label { position: absolute; left: 3px; top: 6px; color: #e6e6e6; font-size: 12px; }
.vp-controls { position: absolute; right: 12px; top: 10px; display: flex; gap: 10px; color: #eee; }
.cube { position: absolute; right: 11px; top: 34px; }
.wcs { position: absolute; right: 37px; top: 146px; width: 48px; height: 18px; gap: 6px; border-radius: 4px; background: #9da0ac; border: 1px solid #787c87; color: #5f636e; font-family: "Liberation Sans", sans-serif; }
.navbar { position: absolute; right: 4px; top: 190px; width: 32px; height: 212px; display: flex; flex-direction: column; align-items: center; background: #5e6266; border-radius: 4px; box-shadow: 0 0 2px 1px #15191e; color: #464c54; padding-top: 1px; }
.navbar button { flex-direction: column; gap: 7px; }
.navbar .corner { align-self: flex-end; margin-right: 2px; }
.navbar .wheel { margin-top: 10px; }
.navbar .pan { margin-top: 8px; }
.navbar .zm { margin-top: 4px; gap: 5px; }
.navbar .orb { margin-top: 5px; gap: 6px; }
.navbar .mot { margin-top: 8px; }
.navbar .corner:last-child { margin-top: auto; margin-bottom: 2px; }

.command { position: absolute; left: 275px; right: 276px; bottom: 1px; font: 12px/16px "DejaVu Sans Mono", monospace; }
.log { display: flex; flex-direction: column; align-items: flex-start; gap: 5px; padding-left: 64px; margin-bottom: 4px; }
.log p { margin: 0; height: 15px; padding: 0 2px; background: #575a5c; border-radius: 2px; white-space: pre; color: #dedede; }
.log p:first-child { color: #aeb0b2; }
.cmd-row { display: flex; height: 25px; }
.cmd-tools { display: flex; align-items: center; gap: 7px; width: 58px; padding-left: 4px; background: #2c3340; color: #ddd; }
.cmd-tools button:last-child { margin-left: 4px; }
.cmd-line { flex: 1; display: flex; align-items: center; background: #fff; color: #222; padding: 2px 4px 0 3px; }
.cmd-line > svg { align-self: flex-start; margin-top: 5px; }
.recent { margin: 0 6px 0 2px; color: #666; }
.cmd-line span { margin-left: 5px; }
.up { margin-left: auto; color: #666; }

.status { display: flex; justify-content: space-between; border-top: 4px solid #3b4453; height: 33px; }
.layouts { display: flex; align-items: center; height: 24px; padding-top: 1px; }
.status .menu { width: 41px; padding-left: 7px; }
.model { width: 69px; height: 24px; background: #3b4453; clip-path: polygon(9px 0, 100% 0, calc(100% - 10px) 100%, 0 100%); font-weight: bold; color: #f2f2f2; }
.lay { width: 56px; color: #e6e6e6; }
.layouts .lay + svg { margin-right: 2px; }
.layouts .add { width: 33px; }
.modes { display: flex; align-items: center; gap: 3px; padding: 2px 2px 0 0; height: 26px; }
.set { display: flex; align-items: center; height: 24px; background: #3b4453; }
.set button { height: 22px; color: #ddd; }
.set .word { width: 48px; font-size: 12px; color: #f0f0f0; }
.set .act { width: 22px; background: #5e8dc0; }
.w25 { width: 24px; }
.w22 { width: 22px; }
.dd { width: 16px; }
.ratio { width: 36px; gap: 2px; }
.set .ratio { color: #d5e3f0; }
.taskbar { display: flex; justify-content: space-between; height: 3px; background: #1d1d1e; padding: 0 587px 0 48px; }
.taskbar i { height: 3px; width: 48px; background: #555; }
.taskbar i:first-child { width: 288px; border: 1px solid #555; border-bottom: 0; background: #303030; }

.dialog { position: absolute; left: 346px; top: 89px; width: 642px; background: #f0f0f0; color: #111; box-shadow: 0 0 4px #0009; font: 11px/14px "Liberation Sans", sans-serif; }
.dlg-title { display: flex; align-items: center; gap: 6px; height: 30px; padding: 0 10px 0 9px; background: #fff; }
.dlg-title h1 { margin: 0; font: 11px/16px "Noto Sans", sans-serif; color: #000; flex: 1; }
.dlg-top { display: flex; align-items: center; height: 36px; padding: 0 14px 2px 0; color: #111; }
.dlg-top label { width: 117px; text-align: right; margin-right: 12px; }
.pick { display: flex; align-items: center; gap: 2px; height: 23px; padding: 0 4px; background: #e1e1e1; border: 1px solid #adadad; }
.pick select, .pick input { flex: 1; min-width: 0; }
.dlg-top .pick { width: 245px; padding-left: 6px; margin-top: 3px; }
.white { background: #fff; border-color: #7a7a7a; }
.dlg-tools { display: flex; gap: 9px; margin-left: 11px; }
.dlg-tools button { width: 16px; }
.dlg-top .dlg-tools { flex: 1; }
.txt { gap: 13px; margin-left: 10px; }
.dlg-main { display: grid; grid-template-columns: 114px 1fr; gap: 10px; padding: 0 7px 10px 5px; }
.places { margin-bottom: 2px; background: #bfcddb; border: 1px solid #7b858f; box-shadow: inset 0 0 0 1px #fff; display: flex; flex-direction: column; }
.places button { flex-direction: column; height: 60px; justify-content: flex-start; padding-right: 2px; }
.places .pic { display: flex; align-items: center; justify-content: center; height: 42px; margin-bottom: 3px; }
.browse { display: flex; gap: 10px; }
.listing { width: 242px; }
.sheet-list { height: 329px; background: linear-gradient(to right, #fff 159px, #e3edf7 159px, #e3edf7 160px, #fff 160px); font: 11px/16px "Noto Sans", sans-serif; color: #000; }
.sheet-list table { width: 100%; table-layout: fixed; border-collapse: collapse; }
.sheet-list th { position: relative; font-weight: normal; text-align: left; padding: 4px 0 4px 6px; white-space: nowrap; }
.sheet-list .name { width: 160px; border-right: 1px solid #e0e0e0; }
.sort { position: absolute; left: 76px; top: 1px; }
.sheet-list p { margin: 2px 0 0; text-align: center; }
.hbar { display: flex; height: 15px; }
.hbar button { width: 17px; }
.hbar i { width: 100px; background: #cdcdcd; }
.hbar button:last-child { margin-left: auto; }
.side { flex: 1; padding-top: 2px; }
fieldset { margin: 0 0 4px; padding: 0; border: 1px solid #dcdcdc; min-width: 0; }
legend { margin-left: 5px; padding: 0 3px; }
.preview { height: 196px; }
.options { height: 130px; display: flex; align-items: flex-start; }
.options input { width: 13px; height: 13px; background: #fff; border: 1px solid #333; margin: 20px 3px 0 10px; }
.options label { margin-top: 20px; line-height: 13px; }
.options label span { margin-left: 2px; }
.entry { display: grid; grid-template-columns: 72px 341px 82px; gap: 9px 3px; align-items: start; padding: 32px 0 0 2px; }
.entry label { padding-top: 1px; }
.entry .pick { height: 22px; padding-left: 3px; }
.entry .white { padding-left: 2px; }
.entry button { height: 21px; background: #e1e1e1; border: 1px solid #adadad; }
</style>
